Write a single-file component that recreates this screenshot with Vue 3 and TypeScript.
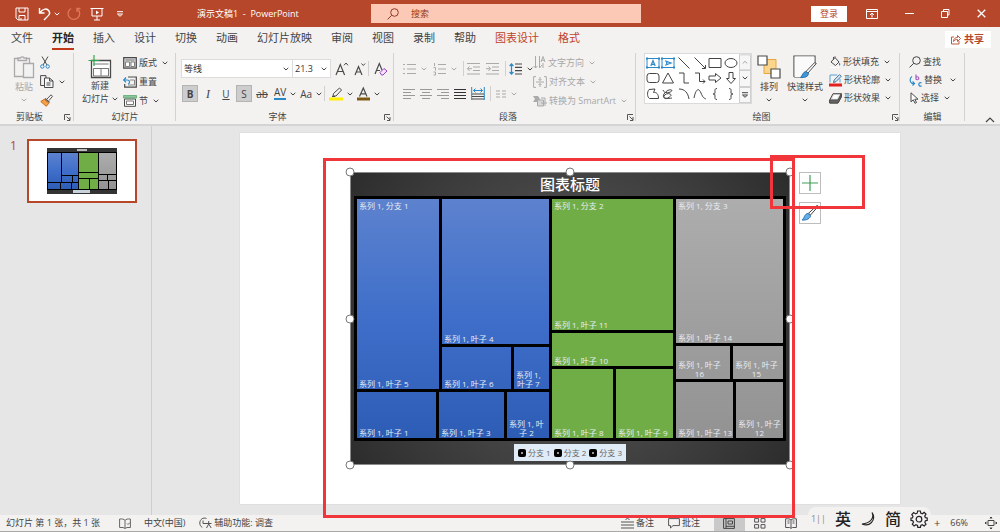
<script setup lang="ts">
import { h, ref, type FunctionalComponent, type VNode } from 'vue'

type IconDef = [number, number, string]

const G = '#4a4a4a'
const D = '#aaaaaa'
const B = '#2b88c8'

const lines = (color: string, rows: [number, number][]): string =>
  rows.map(([x, w], i) => `<path d="M${x} ${1.5 + i * 3}h${w}" stroke="${color}"/>`).join('')

const icons: Record<string, IconDef> = {
  chev: [6, 4, '<path d="M.7 .8 3 3 5.3 .8" stroke="currentColor"/>'],
  save: [14, 14, '<path d="M1 1h12v12H3l-2-2zM4 1v4h6V1M4 13V8.500h6V13M6 11v2"/>'],
  undo: [14, 14, '<path d="M1.500 1v5h5M2 5.500C5 1.500 9 1 11 4c2 3-1 5-5 9" stroke-width="1.400"/>'],
  redo: [14, 14, '<path d="M4 1.500a5.800 5.800 0 1 0 6.500.5M10 5V1.500h3.500" stroke="#df7658" stroke-width="1.300"/>'],
  present: [14, 14, '<path d="M.5 1.500h13M2 1.500v7.500h10V1.500M7 9v4M4 13h6"/><path d="M6 3.500v4l3-2z" fill="#fff"/>'],
  more: [8, 6, '<path d="M1 .7h6M1.500 3 4 5.300 6.500 3z"/>'],
  find: [12, 12, '<circle cx="7.500" cy="4.500" r="3.800"/><path d="M4.700 7.300.6 11.400"/>'],
  mode: [12, 10, '<path d="M.5.500h11v9H.500zM.5 2.500h11M6 8.500v-4M4 6l2-2 2 2"/>'],
  min: [9, 9, '<path d="M0 4.500h9"/>'],
  restore: [9, 9, '<path d="M.5 2.500h6v6h-6zM2.500 2V.500H8V6H7"/>'],
  close: [9, 9, '<path d="M.7.700l7.600 7.600M8.300.700.700 8.300" stroke-width="1.300"/>'],
  share: [11, 11, '<path d="M4 3H1.500v7h7.500V7M3.500 7.500c0-3 2-4 4-4V1.500l3 3-3 3V5.500c-2 0-3 .5-4 2z" stroke-width=".9"/>'],
  paste: [22, 24, `<g stroke="${D}" stroke-width="1.300"><path d="M5 3.500H1.500v18H10M13 3.500h3.500V8" fill="none"/><path d="M5 5.500V3h2.500a2 2 0 0 1 3.500 0h2.500v2.500z" fill="#f2f2f2"/><path d="M10.500 8.500h10v14h-10z" fill="#f2f2f2"/></g>`],
  cut: [10, 13, `<path d="M2 .5 7 9M8 .5 3 9" stroke="${G}"/><g stroke="${B}"><circle cx="2.300" cy="10.500" r="1.700"/><circle cx="7.700" cy="10.500" r="1.700"/></g>`],
  copy: [14, 13, `<g stroke="${G}"><path d="M4 10.500H.600V.600H6V3"/><path d="M4.500 3h5l3.500 3v6.500H4.500zM9.500 3v3H13M6.500 8h4M6.500 10h4" fill="#f8f8f8"/></g>`],
  painter: [13, 13, '<path d="M7 5 11 .8l1.500 1.500L9 6.500" stroke="#555"/><path d="M5 4.500 9.500 8.500" stroke="#555" stroke-width="1.500"/><path d="M4.300 5.300.8 7.500l5.500 4.800 2.500-3z" fill="#f7a14a" stroke="#c96a12"/>'],
  newslide: [24, 24, `<path d="M3.500 5.500h19v17h-19z" fill="#fff" stroke="${G}" stroke-width="1.300"/><path d="M5.500 9h15M5.500 13.500h15M13 13.500v7.500" stroke="#777"/><path d="M5.500 13.500h15V21h-15z" stroke="#777"/><path d="M6 0v11M.5 5.500h11" stroke="#2fa84f" stroke-width="1.200"/>`],
  layout: [14, 12, `<path d="M.7.700h12.600v10.500H.700z" fill="#d5d5d5" stroke="${G}" stroke-width="1.200"/><path d="M2.500 3h9M2.500 5h4v4.500h-4zM8 5h3.500v4.500H8z" fill="#fff" stroke="#666" stroke-width=".8"/>`],
  reset: [14, 12, `<path d="M5 1h8.300v10.200H1.700V8" stroke="${G}" stroke-width="1.200"/><path d="M7 4h4.500v5H5" stroke="#888"/><path d="M.7 4h3.500c3 0 3 3.500.8 4M3 1.500.7 4 3 6.300" stroke="${B}" stroke-width="1.200"/>`],
  section: [14, 12, `<path d="M1.500 4h11v7.300h-11z" fill="#fff" stroke="${G}"/><path d="M3.500 6h7v3.500h-7z" stroke="#777"/><path d="M.5.500h13v2.500H.500z" fill="#8cc79b" stroke="#4f9e64" stroke-width=".7"/>`],
  grow: [14, 14, `<path d="M1 13 5.300 2.500 9.600 13M2.500 9.500h5.700" stroke="${G}" stroke-width="1.200"/><path d="M9 3.300 11 1l2 2.300" stroke="${G}"/>`],
  shrink: [12, 14, `<path d="M1 13 4.500 4.500 8 13M2.300 10h4.500" stroke="${G}" stroke-width="1.200"/><path d="M7.500 1.500 9.300 3.500l1.800-2" stroke="${G}"/>`],
  clearfmt: [14, 14, `<path d="M1 12 5.300 1.500 8 8M2.500 8.500H6" stroke="${G}" stroke-width="1.200"/><path d="m6 10.500 4-4 3 2.500-4 4H7.500z" fill="#f3e3fa" stroke="#9b3fc4"/>`],
  hilite: [14, 14, `<path d="m4.500 6.500 6-5.500 2 2-5.500 6H4zM3 9.500h3" stroke="${G}"/><path d="M0 10.500h14v3H0z" fill="#ffee00"/>`],
  fcolor: [13, 14, `<path d="M2.500 9.500 6.300 1 10 9.500M3.800 6.800h5" stroke="${G}" stroke-width="1.200"/><path d="M0 10.500h13v3H0z" fill="#7f5a12"/>`],
  bullets: [13, 12, `<g stroke="${D}"><path d="M4 1.500h9M4 6h9M4 10.500h9M0 1.500h2M0 6h2M0 10.500h2" stroke-width="1.200"/></g>`],
  numbers: [13, 12, `<g stroke="${D}"><path d="M5 1.500h8M5 6h8M5 10.500h8M1.500 0v3M.5 4.500h2v3M.5 9h2v3h-2" /></g>`],
  outdent: [13, 12, `<path d="M0 .5h13M6 4h7M6 7.500h7M0 11h13M5 5.700H.500M2.500 3.500.500 5.700l2 2.300" stroke="${D}"/>`],
  indent: [13, 12, `<path d="M0 .5h13M6 4h7M6 7.500h7M0 11h13M0 5.700h4.500M2.500 3.500l2 2.200-2 2.300" stroke="${D}"/>`],
  spacing: [13, 12, `<path d="M6 1h7M6 4.300h7M6 7.600h7M6 11h7" stroke="${G}" stroke-width="1.200"/><path d="M2.500 1v10M.6 3l1.900-2.200L4.400 3M.6 9l1.900 2.200L4.400 9" stroke="${B}" stroke-width="1.200"/>`],
  left: [12, 12, lines('#999', [[0, 12], [0, 8], [0, 12], [0, 8]])],
  center: [12, 12, lines('#999', [[0, 12], [2, 8], [0, 12], [2, 8]])],
  right: [12, 12, lines('#999', [[0, 12], [4, 8], [0, 12], [4, 8]])],
  justify: [12, 12, lines('#333', [[0, 12], [0, 12], [0, 12], [0, 12]])],
  distrib: [14, 13, `<path d="M.7 0v13M13.300 0v13M2.500 3.500h9M4.500 1.500l-2 2 2 2M9.500 1.500l2 2-2 2" stroke="${B}"/><path d="M1 7h12M1 9.500h12M1 12h12" stroke="${G}"/>`],
  columns: [10, 8, `<path d="M0 1h4M6 1h4M0 4h4M6 4h4M0 7h4M6 7h4" stroke="${D}"/>`],
  textdir: [13, 13, `<path d="M2.500 0v12M.5 10l2 2 2-2M6.500 0v12M6.500 12 9 9M8 6l2-5.500L12 6M8.600 4.300h2.800M10 7v5" stroke="${D}"/>`],
  aligntext: [14, 12, `<path d="M3 .600H.600v10.800H3M11 .600h2.400v10.800H11M3 6h8M7 1v3.500M5.500 3 7 4.500 8.500 3M7 11V7.500M5.500 9 7 7.500 8.500 9" stroke="${D}"/>`],
  smart: [14, 12, `<path d="M0 1h5l2 3-2 3H0l2-3z" fill="${D}"/><path d="M4.500 5h6v6h-6z" fill="#d8d8d8" stroke="${D}"/><path d="M8 3h4v8M8 8h6" stroke="${D}"/>`],
  arrange: [24, 24, `<path d="M7 4.500h12v14H7z" fill="#fbd58b" stroke="#e9a63a"/><path d="M1 1h9v9H1zM14 14h9v9h-9z" fill="#fff" stroke="${G}" stroke-width="1.200"/>`],
  quick: [24, 24, `<path d="M1 22V1h21v8M1 22h7" fill="none" stroke="${G}" stroke-width="1.200"/><path d="M1.600 1.600h19.800v12L13 22H1.600z" fill="#fafafa"/><path d="M23.300 8.500 15 18l-2-1.500 8.500-8.800z" fill="#fff" stroke="${G}"/><path d="M13 16.500 15.500 18.500c0 3-4 4.500-8 4 2-1.500 2-5.500 5.500-6z" fill="#3f95d5" stroke="#2a74ad"/>`],
  fill: [12, 12, `<path d="M2 6 6 1.500 10 6 6.500 9.500zM6 1.500V.300M4.500 3.500V1" stroke="${G}"/><path d="M10.500 6.500c1.500 2 .5 3 0 3s-1-1 0-3z" fill="${B}"/><path d="M1 11.500h9" stroke="#fff"/>`],
  outline: [13, 13, '<path d="M1 8.500V1h7.500M11 5v3.500" stroke="#5d9ed1"/><path d="m4.500 8.500.7-2.500L10.500.700l1.700 1.600-5.300 5.400z" fill="#d8ebf9" stroke="#3a6c94"/><path d="M0 9.500h13v3H0z" fill="#e32020"/>'],
  effect: [13, 11, `<path d="M.700 7 4 .700h8.300v3L9 10H.700z" fill="#d7d7d7" stroke="${G}"/><path d="M.700 7H9l3.300-6.300V4L9 10H.700z" fill="#666" stroke="${G}"/><path d="M5 2h5L8 5.700H3z" fill="#fff"/>`],
  replace: [13, 13, `<path d="M7 .500v5M7 3.500a1.500 1.500 0 1 1 0 1.500" stroke="#a45cc0" stroke-width="1.200"/><path d="M3 2.500C.500 4 .500 8 3 9.500h2M3.500 7.500l2 2-2 2M12.500 9a1.700 1.700 0 1 0 0 2.700" stroke="${B}" stroke-width="1.200"/>`],
  cursor: [10, 12, `<path d="M2 .800v9l2.300-2 1.700 3.500 1.500-.8L5.800 7.200H9z" fill="#fff" stroke="${G}"/>`],
  launcher: [7, 7, '<path d="M.500 6V.500H6M2.500 2.500l3.500 3.500M6 3v3.500H3" stroke="#555"/>'],
  up: [10, 6, '<path d="M1 5 5 1l4 4" stroke="#444" stroke-width="1.200"/>'],
  proof: [12, 11, '<path d="M6 2.500V10M6 2.500C5 1 3 .800.600 1v8.500H4L6 10.500l2-1h3.400V1C9 .800 7 1 6 2.500M8 5.500l1 1 2-2" stroke="#666"/>'],
  access: [13, 12, '<path d="M7.500 1.500C4 0 .800 2.500.800 6c0 2 1 3.500 2.500 4.500M4 3.500v3h3M7 6.500h5.500M9.700 4v3L7.500 11M9.700 7l2.500 4" stroke="#555"/>'],
  notes: [13, 12, '<path d="M0 5h13M0 8h13M0 11h13M4.500 3l2-2 2 2" stroke="#555"/>'],
  comment: [12, 11, '<path d="M.6.600h10.800v7H5L2.500 10V7.600H.600z" stroke="#555"/>'],
  normal: [12, 11, '<path d="M.6.600h10.800v9.800H.600zM3 .600v9.800M5 3h4.500v3H5zM3 8.300h8" stroke="#444"/>'],
  sorter: [12, 11, '<path d="M.6.600h4v3.500h-4zM7 .600h4v3.500H7zM.6 6.600h4v3.500h-4zM7 6.600h4v3.500H7z" stroke="#555"/>'],
  reading: [12, 11, '<path d="M6 2v8M6 2C5 .800 3 .600.600.800v8.700H4.500L6 10.400l1.500-.9h3.900V.800C9 .600 7 .800 6 2M2.500 3h2M2.500 5h2M7.500 3h2M7.500 5h2" stroke="#555"/>'],
  fit: [12, 12, '<path d="M3 3.500h6v5H3zM6 0v2M6 12v-2M0 6h2M12 6h-2M4.800 1.200 6 0l1.200 1.200M4.800 10.800 6 12l1.200-1.200M1.200 4.800 0 6l1.200 1.200M10.800 4.800 12 6l-1.200 1.200" stroke="#444"/>'],
  plus: [16, 16, '<path d="M8 0v16M0 8h16" stroke="#3c9f57" stroke-width="1.200"/>'],
  brush: [18, 16, '<path d="M17.300 1.200 9.500 10l-2-1.700L16 .500z" fill="#fff" stroke="#444"/><path d="M7 8.500 9.500 10.500c0 3-4 5-8.500 4.500 2.500-1.500 2-6 6-6.500z" fill="#66aee8" stroke="#2c73ad"/>'],
  moon: [16, 16, '<path d="M12 1.500c2.500 5-1 10.500-10 11.500 3 1.200 7 1 9.500-1.500 2.800-3 2.800-7.200.5-10z" stroke="#222" stroke-width="1.100"/>'],
  gear: [18, 18, '<path d="m7.600 1-.4 2.200-1.600.7-1.900-1.300-1.900 1.900 1.200 1.900-.6 1.500L1 8v2.400l1.800.3.700 1.600-1.200 1.900L4.100 16l1.800-1.200 1.600.7.300 1.900h2.600l.4-1.900 1.500-.7 1.900 1.200 1.800-1.900-1.200-1.800.7-1.600 1.700-.3V8l-1.800-.3-.7-1.600 1.300-1.900-1.900-1.800-1.800 1.300-1.600-.7L10.300 1z" stroke="#222" stroke-width="1.200"/><circle cx="9" cy="9.200" r="2.800" stroke="#222" stroke-width="1.200"/>'],
}

const shapeList: { label: string; art: string }[] = [
  { label: '文本框', art: `<path d="M1 1.500h12v9H1z" stroke="${B}"/><path d="M4.800 9 7 3.500 9.200 9M5.500 7.300h3" stroke="${B}" stroke-width="1.200"/><path d="M0 .5h2v2H0zM12 .500h2v2h-2zM0 9.500h2v2H0zM12 9.500h2v2h-2z" fill="${B}"/>` },
  { label: '竖排文本框', art: `<path d="M1 1.500h12v9H1z" stroke="${B}"/><path d="M4 3.800 10 6 4 8.200M5.700 4.500v3" stroke="${B}" stroke-width="1.200"/><path d="M0 .5h2v2H0zM12 .500h2v2h-2zM0 9.500h2v2H0zM12 9.500h2v2h-2z" fill="${B}"/>` },
  { label: '直线', art: '<path d="m1.500.500 11 11"/>' },
  { label: '箭头', art: '<path d="m1.500.500 10.500 10.500M12.500 8v3.500H9"/>' },
  { label: '矩形', art: '<path d="M1 1.500h12v9H1z"/>' },
  { label: '椭圆', art: '<ellipse cx="7" cy="6" rx="6" ry="4.500"/>' },
  { label: '圆角矩形', art: '<rect x="1" y="1.500" width="12" height="9" rx="2.500"/>' },
  { label: '三角形', art: '<path d="M7 1 12.500 11h-11z"/>' },
  { label: '肘形', art: '<path d="M2 1h5v10h5"/>' },
  { label: '肘形箭头', art: '<path d="M2 1h4.500v8.500H12M10 7.500l2 2-2 2"/>' },
  { label: '右箭头', art: '<path d="M1 4h6.500V1.500L13 6l-5.500 4.500V8H1z"/>' },
  { label: '下箭头', art: '<path d="M5 .500h4v6h2.500L7 11.500 2.500 6.500H5z"/>' },
  { label: '任意多边形', art: '<path d="M3 1.500 9 1 7.500 4.500c3-.5 5 1.500 5 6H3.500C1 9 1 4 3 1.500z"/>' },
  { label: '自由曲线', art: '<path d="M2 2c1 4 8 3 9 .5C9 .500 5 3 3 6s1 6 4 4 4-3 2-4-5 0-6 2 3 3 8 2"/>' },
  { label: '弧形', art: '<path d="M2 1c6 0 9 4 10 10"/>' },
  { label: '曲线', art: '<path d="M1 10C3 0 6 0 8 5s3 5 5 6"/>' },
  { label: '左大括号', art: '<path d="M9 .500C6.500.500 7 2 7 4S6.500 6 5 6c1.500 0 2 0 2 2s-.5 3.500 2 3.500"/>' },
  { label: '右大括号', art: '<path d="M5 .500c2.500 0 2 1.500 2 3.500s.5 2 2 2c-1.500 0-2 0-2 2s.5 3.500-2 3.500"/>' },
]

const Icon: FunctionalComponent<{ name: string }> = (props) => {
  const [w, ht, art] = icons[props.name]
  return h('svg', {
    class: 'icon', width: w, height: ht, viewBox: `0 0 ${w} ${ht}`, 'aria-hidden': 'true', innerHTML: art,
  })
}
Icon.props = ['name']

interface TreeNode {
  size: number
  dir?: 'row' | 'column'
  kids?: TreeNode[]
  text?: string[]
}

const leaf = (size: number, ...text: string[]): TreeNode => ({ size, text })
const split = (size: number, dir: 'row' | 'column', kids: TreeNode[]): TreeNode => ({ size, dir, kids })

const branches: { name: string; tone: string; root: TreeNode }[] = [
  {
    name: '系列 1, 分支 1', tone: 'blue',
    root: split(195, 'column', [
      split(193, 'row', [
        leaf(85, '系列 1, 叶子 5'),
        split(110, 'column', [
          leaf(148, '系列 1, 叶子 4'),
          split(45, 'row', [leaf(72, '系列 1, 叶子 6'), leaf(38, '系列 1,', '叶子 7')]),
        ]),
      ]),
      split(49, 'row', [leaf(82, '系列 1, 叶子 1'), leaf(68, '系列 1, 叶子 3'), leaf(45, '系列 1, 叶', '子 2')]),
    ]),
  },
  {
    name: '系列 1, 分支 2', tone: 'green',
    root: split(124, 'column', [
      leaf(134, '系列 1, 叶子 11'),
      leaf(36, '系列 1, 叶子 10'),
      split(72, 'row', [leaf(64, '系列 1, 叶子 8'), leaf(60, '系列 1, 叶子 9')]),
    ]),
  },
  {
    name: '系列 1, 分支 3', tone: 'grey',
    root: split(110, 'column', [
      leaf(147, '系列 1, 叶子 14'),
      split(36, 'row', [leaf(57, '系列 1, 叶子', '16'), leaf(53, '系列 1, 叶子', '15')]),
      split(59, 'row', [leaf(60, '系列 1, 叶子 13'), leaf(50, '系列 1, 叶子', '12')]),
    ]),
  },
]

const drawNode = (n: TreeNode): VNode =>
  n.kids
    ? h('div', { class: ['tm-split', n.dir], style: { flexGrow: n.size } }, n.kids.map(drawNode))
    : h('div', { class: 'tm-leaf', style: { flexGrow: n.size } }, [
        h('span', { class: 'tm-label' }, n.text!.map((t) => h('span', t))),
      ])

const Treemap: FunctionalComponent = () =>
  h('div', { class: 'treemap' }, branches.map((b) =>
    h('div', { class: ['tm-branch', b.tone], style: { flexGrow: b.root.size } }, [
      drawNode({ ...b.root, size: 1 }),
      h('span', { class: 'tm-name' }, b.name),
    ])))

const tabs = ['文件', '开始', '插入', '设计', '切换', '动画', '幻灯片放映', '审阅', '视图', '录制', '帮助', '图表设计', '格式']
const activeTab = ref('开始')
const legend = ['分支 1', '分支 2', '分支 3']
const handles = ['tl', 'tc', 'tr', 'ml', 'mr', 'bl', 'bc', 'br']
</script>

<template>
  <div class="app">
    <header class="titlebar">
      <div class="quick">
        <button aria-label="保存"><Icon name="save" /></button>
        <button aria-label="撤消"><Icon name="undo" /></button>
        <button aria-label="撤消选项"><Icon name="chev" /></button>
        <button aria-label="恢复"><Icon name="redo" /></button>
        <button aria-label="从头开始"><Icon name="present" /></button>
        <button aria-label="自定义快速访问工具栏"><Icon name="more" /></button>
        <h1>演示文稿1&nbsp; -&nbsp; PowerPoint</h1>
      </div>
      <label class="search">
        <Icon name="find" />
        <input type="text" placeholder="搜索" aria-label="搜索" />
      </label>
      <div class="window">
        <button class="login">登录</button>
        <button aria-label="功能区显示选项"><Icon name="mode" /></button>
        <button aria-label="最小化"><Icon name="min" /></button>
        <button aria-label="还原"><Icon name="restore" /></button>
        <button aria-label="关闭"><Icon name="close" /></button>
      </div>
    </header>

    <nav class="tabs">
      <button
        v-for="t in tabs" :key="t"
        :class="{ active: t === activeTab, context: t === '图表设计' || t === '格式' }"
        @click="activeTab = t"
      >{{ t }}</button>
      <button class="share"><Icon name="share" />共享</button>
    </nav>

    <div class="ribbon">
      <section class="group">
        <div class="body clip">
          <button class="big dim"><Icon name="paste" /><span>粘贴</span><Icon name="chev" /></button>
          <div class="stack">
            <button aria-label="剪切"><Icon name="cut" /></button>
            <button aria-label="复制"><Icon name="copy" /><Icon name="chev" /></button>
            <button aria-label="格式刷"><Icon name="painter" /></button>
          </div>
        </div>
        <footer><span>剪贴板</span><button aria-label="剪贴板设置"><Icon name="launcher" /></button></footer>
      </section>

      <section class="group">
        <div class="body slides">
          <button class="big"><Icon name="newslide" /><span>新建</span><span class="inline">幻灯片<Icon name="chev" /></span></button>
          <div class="stack">
            <button><Icon name="layout" />版式<Icon name="chev" /></button>
            <button><Icon name="reset" />重置</button>
            <button><Icon name="section" />节<Icon name="chev" /></button>
          </div>
        </div>
        <footer><span>幻灯片</span></footer>
      </section>

      <section class="group">
        <div class="body rows">
          <div class="font-row">
            <label class="combo family"><select aria-label="字体"><option>等线</option></select><Icon name="chev" /></label>
            <label class="combo points"><select aria-label="字号"><option>21.3</option></select><Icon name="chev" /></label>
            <button aria-label="增大字号"><Icon name="grow" /></button>
            <button aria-label="减小字号"><Icon name="shrink" /></button>
            <i class="sep"></i>
            <button aria-label="清除格式"><Icon name="clearfmt" /></button>
          </div>
          <div class="style-row">
            <button class="on" aria-label="加粗"><b>B</b></button>
            <button class="italic" aria-label="倾斜">I</button>
            <button class="under" aria-label="下划线">U</button>
            <button class="on" aria-label="阴影">S</button>
            <button class="strike" aria-label="删除线">ab</button>
            <button class="kern" aria-label="字符间距"><span>AV</span><Icon name="chev" /></button>
            <button aria-label="更改大小写">Aa<Icon name="chev" /></button>
            <i class="sep"></i>
            <button class="swatch" aria-label="突出显示"><Icon name="hilite" /><Icon name="chev" /></button>
            <button class="swatch" aria-label="字体颜色"><Icon name="fcolor" /><Icon name="chev" /></button>
          </div>
        </div>
        <footer><span>字体</span><button aria-label="字体设置"><Icon name="launcher" /></button></footer>
      </section>

      <section class="group">
        <div class="body para">
          <div class="rows">
            <div class="list-row">
              <button class="dim" aria-label="项目符号"><Icon name="bullets" /><Icon name="chev" /></button>
              <button class="dim" aria-label="编号"><Icon name="numbers" /><Icon name="chev" /></button>
              <i class="sep"></i>
              <button aria-label="降低列表级别"><Icon name="outdent" /></button>
              <button aria-label="提高列表级别"><Icon name="indent" /></button>
              <i class="sep"></i>
              <button aria-label="行距"><Icon name="spacing" /><Icon name="chev" /></button>
            </div>
            <div class="align-row">
              <button aria-label="左对齐"><Icon name="left" /></button>
              <button aria-label="居中"><Icon name="center" /></button>
              <button aria-label="右对齐"><Icon name="right" /></button>
              <button aria-label="两端对齐"><Icon name="justify" /></button>
              <button aria-label="分散对齐"><Icon name="distrib" /></button>
              <i class="sep"></i>
              <button class="dim" aria-label="分栏"><Icon name="columns" /><Icon name="chev" /></button>
            </div>
          </div>
          <div class="stack dim">
            <button><Icon name="textdir" />文字方向<Icon name="chev" /></button>
            <button><Icon name="aligntext" />对齐文本<Icon name="chev" /></button>
            <button><Icon name="smart" />转换为 SmartArt<Icon name="chev" /></button>
          </div>
        </div>
        <footer><span>段落</span><button aria-label="段落设置"><Icon name="launcher" /></button></footer>
      </section>

      <section class="group">
        <div class="body draw">
          <div class="gallery">
            <div class="shapes">
              <button v-for="s in shapeList" :key="s.label" :aria-label="s.label">
                <svg class="icon" width="14" height="12" viewBox="0 0 14 12" aria-hidden="true" v-html="s.art"></svg>
              </button>
            </div>
            <div class="spin">
              <button class="dim flip" aria-label="上一行"><Icon name="chev" /></button>
              <button aria-label="下一行"><Icon name="chev" /></button>
              <button aria-label="更多形状"><Icon name="more" /></button>
            </div>
          </div>
          <button class="big"><Icon name="arrange" /><span>排列</span><Icon name="chev" /></button>
          <button class="big"><Icon name="quick" /><span>快速样式</span><Icon name="chev" /></button>
          <div class="stack tight">
            <button><Icon name="fill" />形状填充<Icon name="chev" /></button>
            <button><Icon name="outline" />形状轮廓<Icon name="chev" /></button>
            <button><Icon name="effect" />形状效果<Icon name="chev" /></button>
          </div>
        </div>
        <footer><span>绘图</span><button aria-label="形状设置"><Icon name="launcher" /></button></footer>
      </section>

      <section class="group">
        <div class="body edit">
          <div class="stack tight">
            <button><Icon name="find" />查找</button>
            <button class="wide"><Icon name="replace" />替换<Icon name="chev" /></button>
            <button><Icon name="cursor" />选择<Icon name="chev" /></button>
          </div>
        </div>
        <footer><span>编辑</span></footer>
      </section>

      <button class="collapse" aria-label="折叠功能区"><Icon name="up" /></button>
    </div>

    <main class="work">
      <aside class="panel">
        <span class="num">1</span>
        <button class="thumb" aria-label="幻灯片 1">
          <span class="mini"><i class="mini-title"></i><Treemap /><i class="mini-legend"></i></span>
        </button>
      </aside>
      <div class="canvas">
        <div class="slide">
          <div class="chart">
            <h2>图表标题</h2>
            <Treemap />
            <ul class="legend">
              <li v-for="l in legend" :key="l"><i></i>{{ l }}</li>
            </ul>
            <span v-for="p in handles" :key="p" class="handle" :class="p"></span>
            <div class="chart-tools">
              <button aria-label="图表元素"><Icon name="plus" /></button>
              <button aria-label="图表样式"><Icon name="brush" /></button>
            </div>
          </div>
          <span class="mark chart-mark"></span>
          <span class="mark tool-mark"></span>
        </div>
      </div>
    </main>

    <footer class="status">
      <span class="count">幻灯片 第 1 张，共 1 张</span>
      <button aria-label="拼写检查"><Icon name="proof" /></button>
      <span class="lang">中文(中国)</span>
      <button><Icon name="access" />辅助功能: 调查</button>
      <div class="right">
        <button class="notes"><Icon name="notes" />备注</button>
        <button class="comments"><Icon name="comment" />批注</button>
        <button class="view current" aria-label="普通视图"><Icon name="normal" /></button>
        <button class="view" aria-label="幻灯片浏览"><Icon name="sorter" /></button>
        <button class="view" aria-label="阅读视图"><Icon name="reading" /></button>
        <button class="zoom-in" aria-label="放大">+</button>
        <span class="percent">66%</span>
        <button aria-label="适应窗口"><Icon name="fit" /></button>
      </div>
      <div class="ime"><small>1||</small><span>英</span><Icon name="moon" /><span>简</span><Icon name="gear" /></div>
    </footer>
  </div>
</template>

<style>
html, body { margin: 0; height: 100%; overflow: hidden; }
#app { height: 100%; }
.icon { display: block; flex: none; fill: none; stroke: currentColor; overflow: visible; }
.icon > [fill]:not([stroke]) { stroke: none; }

.treemap { display: flex; background: #000; padding: 3px 0 0 3px; box-sizing: border-box; }
.tm-branch { position: relative; display: flex; flex-basis: 0; min-width: 0; }
.tm-branch.blue { background: linear-gradient(#5d82ce, #3f6fca 48%, #2c5cb4); }
.tm-branch.green { background: #70ad47; }
.tm-branch.grey { background: linear-gradient(#adadad, #929292); }
.tm-split { display: flex; flex-basis: 0; min-width: 0; min-height: 0; }
.tm-split.column { flex-direction: column; }
.tm-leaf {
  display: flex; align-items: flex-end; flex-basis: 0; min-width: 0; min-height: 0;
  box-shadow: inset -3px -3px #000;
}
.tm-label { display: grid; padding: 0 0 4px 2px; text-align: center; }
.tm-label, .tm-name { color: #e9edf3; font-size: 8px; line-height: 9px; white-space: nowrap; }
.tm-name { position: absolute; left: 2px; top: 2px; }
</style>

<style scoped>
.app {
  display: flex; flex-direction: column; height: 100%; min-height: 532px;
  font: 9px/12px "Open Sans", "Noto Sans CJK SC", sans-serif; color: #444; background: #e6e6e6;
}
button {
  display: inline-flex; align-items: center; gap: 2px; padding: 0; border: 0;
  background: none; color: inherit; font: inherit; white-space: nowrap;
}
h1, h2, ul { margin: 0; padding: 0; font-weight: normal; }
.dim { color: #a8a8a8; }

.titlebar {
  display: grid; grid-template-columns: 371fr 270fr 359fr; align-items: center;
  height: 27px; flex: none; background: #b7472a; color: #fff;
}
.quick { display: flex; align-items: center; padding-left: 15px; }
.quick button:nth-child(2) { margin-left: 9px; }
.quick button:nth-child(3) { margin-left: 2px; }
.quick button:nth-child(4) { margin-left: 7px; }
.quick button:nth-child(5) { margin-left: 9px; }
.quick button:nth-child(6) { margin-left: 12px; }
.quick h1 { margin-left: 73px; font-size: 9px; line-height: 14px; white-space: pre; word-break: keep-all; }
.search {
  display: flex; align-items: center; gap: 12px; height: 19px; padding-left: 16px;
  background: #fdc9b7; color: #8e3a22;
}
.search input {
  flex: 1; min-width: 0; border: 0; padding: 0; outline: 0; background: none; color: inherit; font: inherit;
}
.search input::placeholder { color: #8e3a22; opacity: 1; }
.window { display: flex; justify-content: flex-end; align-items: center; gap: 27px; padding-right: 14px; }
.window .login {
  width: 36px; height: 16px; justify-content: center; background: #fff; color: #b7472a; margin-right: -8px;
}

.tabs { display: flex; align-items: center; gap: 19px; height: 24px; flex: none; padding: 0 9px 0 11px; background: #f3f2f1; }
.tabs button { height: 22px; font-size: 11px; line-height: 16px; border-bottom: 2px solid transparent; box-sizing: border-box; }
.tabs .active { font-weight: bold; color: #262626; border-color: #c0371a; }
.tabs .context { color: #c0432a; }
.tabs .share {
  margin-left: auto; height: 17px; padding: 0 7px 0 5px; border: 0; background: #fff;
  color: #b7472a; font-size: 10px; font-weight: bold; gap: 3px;
}

.ribbon {
  display: grid; grid-template-columns: 74fr 102fr 218fr 242fr 264fr 65fr 35fr;
  height: 75px; flex: none; background: #f3f2f1; border-bottom: 2px solid #d4d4d4; box-sizing: border-box;
}
.group {
  display: grid; grid-template-rows: 1fr 15px; min-width: 0; padding-top: 2px;
  background: linear-gradient(#d2d2d2, #d2d2d2) right 2px / 1px 68px no-repeat;
}
.group > footer { position: relative; display: flex; justify-content: center; line-height: 14px; }
.group > footer:has(button) { padding-right: 15px; }
.group > footer button { position: absolute; right: 3px; top: 4px; }
.body { display: flex; align-items: flex-start; }
.big { flex-direction: column; gap: 2px; padding-top: 2px; }
.big > .icon:last-child { margin-top: 3px; }
.big span { line-height: 12px; }
.inline { display: flex; align-items: center; gap: 3px; }
.stack { display: grid; grid-auto-rows: 19px; justify-items: start; }
.stack.tight { grid-auto-rows: 18px; }
.stack button .icon:last-child:not(:first-child) { margin-left: 3px; }
.clip { padding-left: 13px; gap: 5px; }
.slides { padding-left: 8px; gap: 5px; }
.slides .big { gap: 1px; }
.rows { display: grid; grid-template-rows: 25px 25px; align-items: center; padding-top: 3px; }
.rows > div { display: flex; align-items: center; }
.group > .rows { padding-left: 6px; align-content: start; }
.sep { width: 1px; height: 15px; background: #d0d0d0; flex: none; }

.combo { position: relative; display: flex; align-items: center; height: 17px; background: #fff; outline: 1px solid #dcdcdc; }
.combo select {
  appearance: none; width: 100%; height: 17px; padding: 0 2px; border: 0; background: none; color: #333; font: inherit;
}
.combo .icon { position: absolute; right: 3px; pointer-events: none; }
.family { width: 110px; }
.points { width: 37px; margin-left: 1px; }
.font-row { gap: 5px; }
.font-row .points { margin-left: -4px; }
.font-row .sep { margin-left: -3px; }
.style-row { gap: 2px; font-size: 10px; }
.style-row button { min-width: 16px; height: 17px; justify-content: center; }
.style-row .on { background: #cdcdcd; outline: 1px solid #b4b4b4; outline-offset: -1px; }
.style-row .italic { font-family: "Liberation Serif", serif; font-style: italic; font-size: 12px; }
.style-row .under { text-decoration: underline; }
.style-row .strike { text-decoration: line-through; }
.kern span { border-bottom: 2px solid #2b88c8; line-height: 11px; }
.style-row button:has(.icon) { gap: 4px; margin-left: 2px; }
.style-row .swatch { gap: 5px; }

.para { padding-left: 9px; justify-content: space-between; padding-right: 10px; }
.list-row { gap: 6px; }
.list-row button .icon + .icon { margin-left: 3px; }
.list-row .sep + button { margin-left: -3px; }
.align-row { gap: 5px; }
.align-row .dim .icon + .icon { margin-left: 3px; }

.draw { padding-left: 9px; gap: 6px; justify-content: space-between; padding-right: 11px; }
.gallery { display: flex; height: 49px; margin-top: 1px; background: #fff; outline: 1px solid #dadada; }
.shapes { display: grid; grid-template-columns: repeat(6, 1fr); width: 94px; padding: 1px 0; box-sizing: border-box; }
.shapes button { justify-content: center; }
.spin { display: grid; grid-template-rows: repeat(3, 1fr); width: 12px; background: #f6f6f6; }
.spin button { justify-content: center; outline: 1px solid #cfcfcf; outline-offset: -1px; }
.flip { transform: rotate(180deg); }
.edit { padding-left: 9px; }
.edit .wide .icon:last-child { margin-left: 6px !important; }
.collapse { align-self: end; justify-self: end; margin: 0 5px 2px 0; }

.work { display: flex; flex: 1; min-height: 0; }
.panel {
  display: flex; align-items: flex-start; gap: 10px; width: 152px; padding: 13px 14px 0 10px;
  box-sizing: border-box; border-right: 1px solid #cfcfcf; flex: none;
}
.num { color: #c0432a; font-size: 12px; line-height: 14px; }
.thumb {
  flex: 1; height: 64px; justify-content: center; background: #fff; border: 2px solid #b7472a; box-sizing: border-box;
}
.mini { display: grid; grid-template-rows: 4px 1fr 4px; width: 70px; height: 46px; background: #333; box-sizing: border-box; }
.mini .treemap { padding: 1px 0 0 1px; }
.mini :deep(.tm-leaf) { box-shadow: inset -1px -1px #000; }
.mini :deep(.tm-label), .mini :deep(.tm-name) { display: none; }
.mini-title { width: 10px; height: 2px; margin: 1px auto 0; background: #bbb; }
.mini-legend { width: 17px; height: 3px; margin: 0 auto; background: #c9d1da; }

.canvas { flex: 1; padding: 7px 100px 0 88px; min-width: 0; }
.slide { position: relative; aspect-ratio: 16 / 9; background: #fff; box-shadow: 0 0 1px #bbb; }
.chart {
  position: absolute; left: 110px; top: 39px; width: 440px; height: 293px; box-sizing: border-box;
  display: grid; grid-template-rows: 24px 245px 1fr; padding: 0 4px;
  background: radial-gradient(circle at center, #565656, #474747 45%, #2c2c2c); outline: 1px solid #8a8a8a; outline-offset: -1px;
}
.chart h2 { color: #fff; font-size: 15px; font-weight: 500; line-height: 24px; text-align: center; }
.legend {
  display: flex; align-items: center; gap: 3px; justify-self: center; height: 17px; margin-top: 3px; padding: 0 4px;
  background: #dfebf7; list-style: none; color: #666; font-size: 8px; line-height: 12px;
}
.legend li { display: flex; align-items: center; gap: 2px; white-space: nowrap; }
.legend i { width: 8px; height: 8px; border-radius: 2px; background: radial-gradient(circle, #999 1px, #000 1px); }
.handle {
  position: absolute; width: 9px; height: 9px; box-sizing: border-box; border: 1px solid #777;
  border-radius: 50%; background: #fff; transform: translate(-50%, -50%);
}
.tl, .tc, .tr { top: 0; }
.ml, .mr { top: 50%; }
.bl, .bc, .br { top: 100%; }
.tl, .ml, .bl { left: 0; }
.tc, .bc { left: 50%; }
.tr, .mr, .br { left: 100%; }
.chart-tools { position: absolute; left: 449px; top: 0; display: grid; gap: 8px; }
.chart-tools button { width: 22px; height: 22px; justify-content: center; background: #fff; border: 1px solid #bdbdbd; box-sizing: border-box; }
.mark { position: absolute; z-index: 2; border: 3px solid #f0353b; box-sizing: border-box; pointer-events: none; }
.chart-mark { left: 83px; top: 25px; width: 472px; height: 360px; }
.tool-mark { left: 530px; top: 22px; width: 95px; height: 54px; }

.status {
  position: relative; display: flex; align-items: center; height: 17px; flex: none; padding: 0 3px 0 6px;
  background: #f3f2f1; border-bottom: 1px solid #a8a8a8; box-sizing: border-box;
}
.count { margin-right: 19px; }
.lang { margin: 0 14px 0 13px; }
.right { display: flex; align-items: center; margin-left: auto; }
.comments { margin: 0 14px; }
.view { width: 31px; height: 16px; justify-content: center; }
.view.current { background: #c9c9c9; }
.zoom-in { margin-left: 127px; font-size: 11px; }
.percent { margin: 0 17px 0 10px; }
.ime {
  position: absolute; right: 69px; bottom: 0; display: flex; align-items: center; gap: 9px; height: 24px;
  padding: 0 3px; color: #222; font-size: 16px; font-weight: 500; line-height: 20px; background: #f3f2f1; border-radius: 8px 8px 0 0;
}
.ime small { font-size: 9px; color: #888; }
</style>
